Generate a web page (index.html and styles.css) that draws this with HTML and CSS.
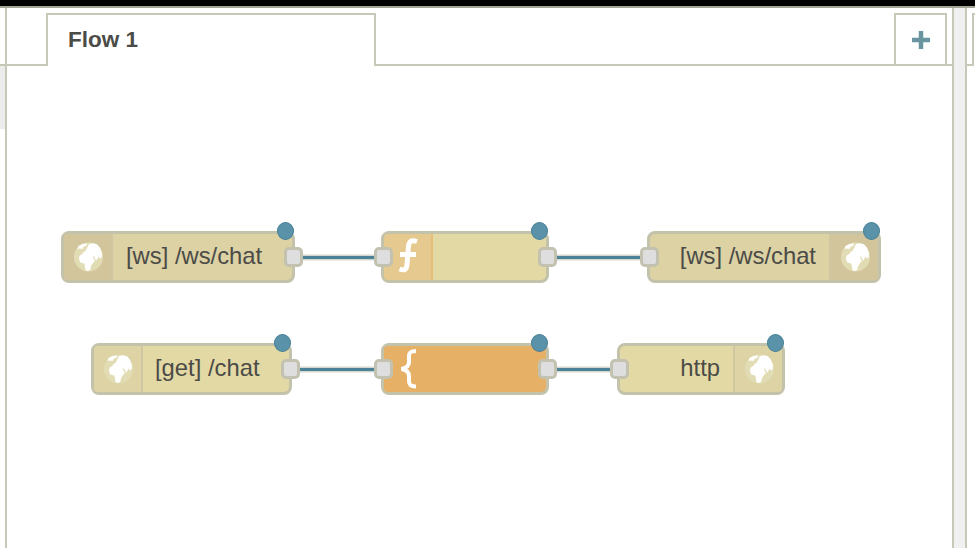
FILE: index.html
```html
<!DOCTYPE html>
<html lang="en">
<head>
<meta charset="utf-8">
<title>Flow 1</title>
<link rel="stylesheet" href="styles.css">
</head>
<body>
<svg class="defs" aria-hidden="true">
  <symbol id="globe" viewBox="0 0 50 46">
    <circle class="halo" cx="24.500" cy="23" r="14.500"/>
    <path d="M13.500 15l1-3 4-2 5-.5-1 2-3 1.500-1 2-3-.5zM19.500 18l2-1 1.500-3 2-4 4-.7 4 1 3 3.500 2 5.500-.5 4.500-2 .5-1-2-1 2.500-1.500 2-1.500-3.500-1.500-1.500.5 3 1.500 2-2.500 3-1.500 2.500-.5 3-1.500 1.500h-3l-1-3-.5-4-4.500-1.500-1-3.500.5-3 3-2z"/>
  </symbol>
  <symbol id="function" viewBox="0 0 50 46">
    <path class="stroke" d="M33 7.500c-6-2-8 0-8.500 5l-1.500 18c-.5 5-2.500 6.500-7.500 4.500M16 20.500h16"/>
  </symbol>
  <symbol id="brace" viewBox="0 0 50 46">
    <path class="stroke thin" d="M32 5c-5 0-7 1-7 5v6c0 4-2 6-7.500 7 5.500 1 7.500 3 7.500 7v5c0 4 2 5.500 7 5.500"/>
  </symbol>
</svg>
<div class="app">
  <header class="topbar"></header>
  <div class="workspace">
    <aside class="palette"><div class="gap"></div><div class="scroll"></div></aside>
    <main class="editor">
      <nav class="tabs">
        <div class="spacer"></div>
        <div class="tab">Flow 1</div>
        <div class="rest"></div>
        <button class="add" aria-label="Add flow"><svg viewBox="0 0 18 18"><path d="M9 0v18M0 9h18"/></svg></button>
        <div class="end"></div>
      </nav>
    </main>
    <div class="separator"></div>
    <aside class="sidebar"><div class="side-line"></div><div class="side-tab"></div></aside>
  </div>
  <section class="canvas">
    <svg class="wires" viewBox="0 0 975 548">
      <path class="casing" d="M294 257.500h89M548 257.500h101M291 369.500h92M548 369.500h71"/>
      <path class="wire" d="M294 257.500h89M548 257.500h101M291 369.500h92M548 369.500h71"/>
    </svg>
    <div class="node ws-in busy"><span class="icon"><svg><use href="#globe"/></svg></span><span class="label">[ws] /ws/chat</span><i class="port out"></i><i class="dot"></i></div>
    <div class="node func"><span class="icon"><svg><use href="#function"/></svg></span><i class="port in"></i><i class="port out"></i><i class="dot"></i></div>
    <div class="node ws-out busy reverse"><span class="icon"><svg><use href="#globe"/></svg></span><span class="label">[ws] /ws/chat</span><i class="port in"></i><i class="dot"></i></div>
    <div class="node get"><span class="icon"><svg><use href="#globe"/></svg></span><span class="label">[get] /chat</span><i class="port out"></i><i class="dot"></i></div>
    <div class="node template"><span class="icon"><svg><use href="#brace"/></svg></span><i class="port in"></i><i class="port out"></i><i class="dot"></i></div>
    <div class="node http reverse"><span class="icon"><svg><use href="#globe"/></svg></span><span class="label">http</span><i class="port in"></i><i class="dot"></i></div>
  </section>
</div>
</body>
</html>
```
FILE: styles.css
```css
* { box-sizing: border-box; }
body { margin: 0; background: #fff; color: #4b4b47; font-family: "Liberation Sans", Arial, sans-serif; }
.defs { position: absolute; width: 0; height: 0; }
.app { position: relative; width: 975px; height: 548px; overflow: hidden; display: flex; flex-direction: column; }
.topbar { height: 8px; flex: none; background: #000; border-bottom: 2px solid #a5a595; }
.workspace { flex: 1; display: flex; }
.palette { width: 7px; border-right: 2px solid #c8c8b9; }
.gap { height: 58px; border-bottom: 2px solid #c8c8b9; }
.scroll { height: 63px; background: #ececec; }
.editor { flex: 1; }
.tabs { display: flex; height: 58px; padding-top: 5px; }
.spacer { width: 39px; border-bottom: 2px solid #c8c8b9; }
.tab { width: 330px; padding: 12px 0 0 20px; border: 2px solid #c8c8b9; border-bottom: 0; font-size: 22.500px; line-height: 26px; font-weight: bold; }
.rest { flex: 1; border-bottom: 2px solid #c8c8b9; }
.add { width: 53px; padding: 0; display: flex; align-items: center; justify-content: center; border: 2px solid #c8c8b9; background: #fff; }
.add svg { width: 18px; height: 18px; fill: none; stroke: #6994a0; stroke-width: 4.500; }
.end { width: 5px; border-bottom: 2px solid #c8c8b9; }
.separator { width: 15px; background: #f0f0f0; border: solid #c8c8b9; border-width: 0 2px; }
.sidebar { width: 8px; display: flex; }
.side-line { width: 5px; height: 58px; border-bottom: 2px solid #c8c8b9; }
.side-tab { width: 3px; height: 53px; margin-top: 5px; border: solid #c8c8b9; border-width: 2px 0 0 2px; }
.canvas { position: absolute; inset: 0; }
.wires { position: absolute; inset: 0; width: 975px; height: 548px; fill: none; }
.casing { stroke: #d5d8d1; stroke-width: 6; }
.wire { stroke: #4b8295; stroke-width: 3; }
.node { position: absolute; display: flex; height: 52px; border: 3px solid #c3c2ab; border-radius: 8px; background: #e3d9a5; }
.busy { background: #dcd2a4; }
.reverse { flex-direction: row-reverse; }
.icon { width: 49px; flex: none; background: #ddd3a5; border-right: 2px solid #cfc7a1; border-radius: 4px 0 0 4px; }
.reverse .icon { border-right: 0; border-left: 2px solid #cfc7a1; border-radius: 0 4px 4px 0; }
.busy .icon { background: #d2c59c; }
.icon svg { display: block; width: 50px; height: 46px; fill: #fff; }
.halo { fill: #e2dcb4; }
.stroke { fill: none; stroke: #fff; stroke-width: 5; }
.thin { stroke-width: 4; }
.label { padding-left: 13px; font-size: 23.800px; line-height: 43px; white-space: nowrap; }
.reverse .label { padding: 0 13px 0 0; }
.get .label { padding-left: 12px; }
.port { position: absolute; top: 13px; width: 19px; height: 20px; border: 3px solid #c3c2b0; border-radius: 5px; background: #dedede; }
.port.in { left: -10px; }
.port.out { right: -11px; }
.dot { position: absolute; top: -12px; right: -2px; width: 17px; height: 18px; border: 1px solid #477f95; border-radius: 50%; background: #5a93a9; }
.ws-in { left: 61px; top: 231px; width: 234px; }
.func { left: 381px; top: 231px; width: 168px; }
.func .icon { background: #e5c98e; border-color: #e7bd7a; }
.ws-out { left: 647px; top: 231px; width: 234px; }
.get { left: 91px; top: 343px; width: 201px; }
.template { left: 381px; top: 343px; width: 168px; background: #e7b067; }
.template .icon { background: #e7b067; border-color: #e7b067; }
.http { left: 617px; top: 343px; width: 168px; }
```
